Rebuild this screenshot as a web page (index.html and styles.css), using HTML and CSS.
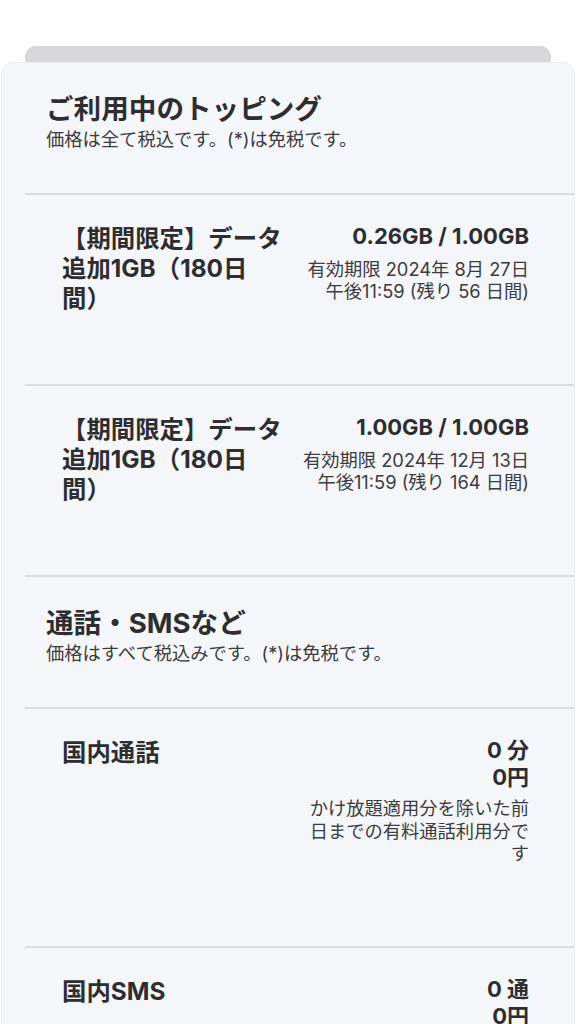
FILE: index.html
```html
<!DOCTYPE html>
<html lang="ja">
<head>
  <meta charset="UTF-8" />
  <meta name="viewport" content="width=device-width, initial-scale=1.0"/>
  <title>ご利用状況</title>
  <link rel="stylesheet" href="styles.css">
</head>
<body>
  <div class="sheet">
    <div class="sheet-tab"></div>
    <div class="sheet-body">

      <!-- トッピング -->
      <section class="group">
        <div class="group-head">
          <h2>ご利用中のトッピング</h2>
          <p>価格は全て税込です。(*)は免税です。</p>
        </div>

        <div class="row">
          <div class="row-name">【期間限定】データ追加1GB（180日間）</div>
          <div class="row-value">
            <div class="amount">0.26GB / 1.00GB</div>
            <div class="note">有効期限 2024年 8月 27日<br>午後11:59 (残り 56 日間)</div>
          </div>
        </div>

        <div class="row">
          <div class="row-name">【期間限定】データ追加1GB（180日間）</div>
          <div class="row-value">
            <div class="amount">1.00GB / 1.00GB</div>
            <div class="note">有効期限 2024年 12月 13日<br>午後11:59 (残り 164 日間)</div>
          </div>
        </div>
      </section>

      <!-- 通話・SMS -->
      <section class="group">
        <div class="group-head">
          <h2>通話・SMSなど</h2>
          <p>価格はすべて税込みです。(*)は免税です。</p>
        </div>

        <div class="row row-tall">
          <div class="row-name">国内通話</div>
          <div class="row-value">
            <div class="amount">0 分</div>
            <div class="amount">0円</div>
            <div class="note note-desc">かけ放題適用分を除いた前日までの有料通話利用分です</div>
          </div>
        </div>

        <div class="row">
          <div class="row-name">国内SMS</div>
          <div class="row-value">
            <div class="amount">0 通</div>
            <div class="amount">0円</div>
          </div>
        </div>
      </section>

    </div>
  </div>
</body>
</html>
```

FILE: styles.css
```css
body {
  margin: 0;
  background: #fff;
  font-family: Inter, "Noto Sans CJK JP", sans-serif;
  color: #2e2e30;
  overflow: hidden;
}

.sheet {
  padding-top: 46px;
}

.sheet-tab {
  height: 16px;
  margin: 0 25px;
  background: #d7d7db;
  border-radius: 11px 11px 0 0;
}

.sheet-body {
  margin: 0 1px;
  min-height: 1000px;
  background: #f5f6f9;
  border: 1px solid #ececf0;
  border-bottom: none;
  border-radius: 12px 12px 0 0;
}

.group-head {
  margin-left: 23px;
  padding: 28px 0 42px 21px;
  border-bottom: 2px solid #dcdce0;
}

.group-head h2 {
  margin: 0;
  font-size: 27.6px;
  line-height: 36px;
  font-weight: 700;
}

.group-head p {
  margin: 0;
  font-size: 18.3px;
  line-height: 24px;
  color: #3c3c3e;
}

.row {
  display: flex;
  margin-left: 23px;
  padding: 28px 45px 71px 37px;
  border-bottom: 2px solid #dcdce0;
}

.row-tall {
  padding-bottom: 81px;
}

.row-name {
  flex: none;
  width: 232px;
  font-size: 24.4px;
  line-height: 30px;
  font-weight: 700;
  text-spacing-trim: space-all;
}

.row-value {
  flex: 1;
  text-align: right;
}

.amount {
  font-size: 22px;
  line-height: 27px;
  font-weight: 700;
}

.note {
  margin-top: 8px;
  font-size: 18.3px;
  line-height: 22px;
  color: #3c3c3e;
}

.note-desc {
  margin-top: 6px;
  line-height: 22.5px;
}
```
